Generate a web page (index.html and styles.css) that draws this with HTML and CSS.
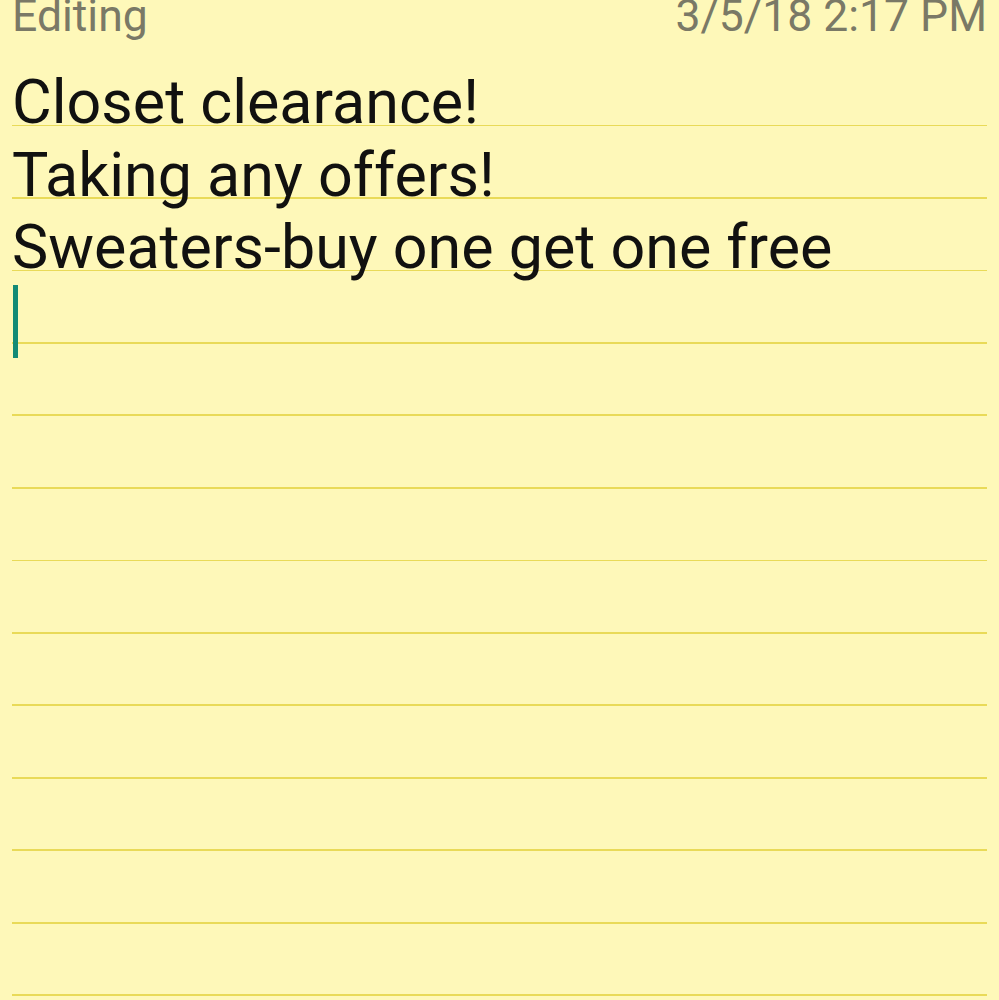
FILE: index.html
```html
<!DOCTYPE html>
<html>
<head>
<meta charset="utf-8">
<link rel="stylesheet" href="styles.css">
</head>
<body>
<div class="page">
  <div class="header">
    <span class="status">Editing</span>
    <span class="date">3/5/18 2:17 PM</span>
  </div>
  <div class="note">
    <div class="text">
      <div class="line">Closet clearance!</div>
      <div class="line">Taking any offers!</div>
      <div class="line">Sweaters-buy one get one free</div>
      <div class="caret-line"><span class="caret"></span></div>
    </div>
  </div>
</div>
</body>
</html>
```
FILE: styles.css
```css
html, body {
  margin: 0;
  padding: 0;
  background: #fef8b9;
}
.page {
  width: 999px;
  height: 1000px;
  overflow: hidden;
  background: #fef8b9;
  font-family: Roboto, "Liberation Sans", sans-serif;
}
.header {
  display: flex;
  justify-content: space-between;
  align-items: flex-start;
  height: 54.2px;
  padding: 0 12px 0 12px;
  font-size: 44.5px;
  line-height: 33.6px;
  color: #7a7966;
}
.note {
  margin: 0 12px;
  height: 946px;
  background-image: repeating-linear-gradient(
    to bottom,
    transparent 0,
    transparent 70.5px,
    #e9da58 70.5px,
    #e9da58 72.5px
  );
}
.text {
  padding-top: 12px;
  font-size: 61px;
  line-height: 72.5px;
  color: #111110;
}
.line {
  white-space: nowrap;
}
.caret-line {
  height: 72.5px;
}
.caret {
  display: block;
  width: 5px;
  height: 73.5px;
  margin-left: 1px;
  margin-top: 1px;
  background: #138a75;
}
```
